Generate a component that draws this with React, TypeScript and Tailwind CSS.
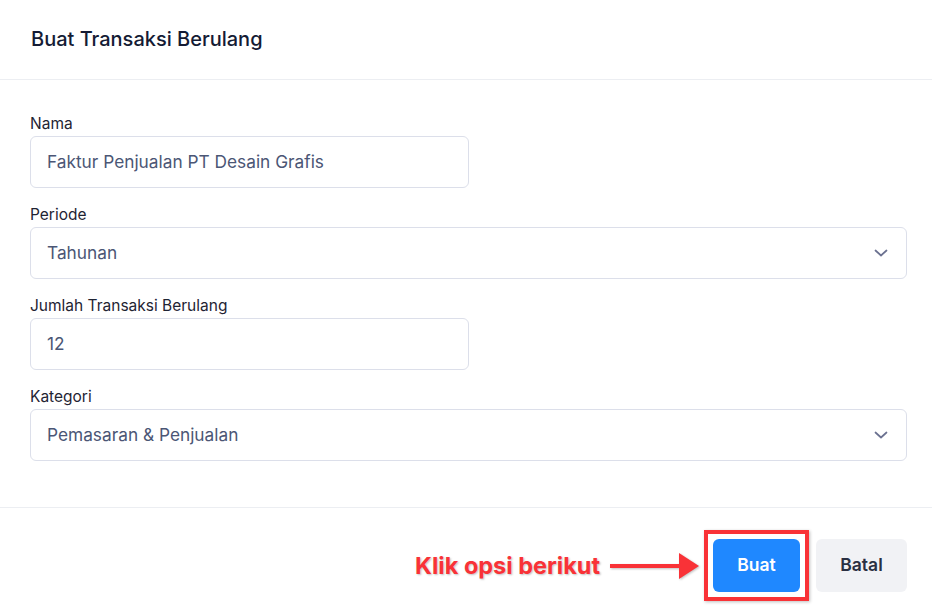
import React from 'react'

const font = { fontFamily: 'Inter, "Noto Sans", sans-serif' }

function Field({ label, value, wide, select }: { label: string; value: string; wide?: boolean; select?: boolean }) {
  return (
    <div className="flex flex-col">
      <label className="text-[15.5px] leading-5 text-[#1f2433] mb-[2px]">{label}</label>
      <div
        className={`h-[52px] ${wide ? 'w-full' : 'w-[439px]'} flex items-center justify-between rounded-md border border-[#dcdfea] bg-white pl-4 pr-[18px]`}
      >
        <span className="text-[17.3px] text-[#4b5675]">{value}</span>
        {select && (
          <svg width="14" height="8" viewBox="0 0 14 8" fill="none">
            <path d="M1.5 1.5L7 6.5L12.5 1.5" stroke="#6b7190" strokeWidth="1.7" strokeLinecap="round" strokeLinejoin="round" />
          </svg>
        )}
      </div>
    </div>
  )
}

export default function App() {
  return (
    <div className="w-[932px] h-[616px] bg-white overflow-hidden" style={font}>
      <div className="h-[80px] px-[31px] flex items-center border-b border-[#eceef2]">
        <h2 className="text-[20px] font-medium text-[#141b34] pb-[2px]">Buat Transaksi Berulang</h2>
      </div>

      <div className="pt-[34px] pb-[46px] pl-[30px] pr-[25px] flex flex-col gap-[17px] border-b border-[#eceef2]">
        <Field label="Nama" value="Faktur Penjualan PT Desain Grafis" />
        <Field label="Periode" value="Tahunan" wide select />
        <Field label="Jumlah Transaksi Berulang" value="12" />
        <Field label="Kategori" value="Pemasaran & Penjualan" wide select />
      </div>

      <div className="pt-[22px] pr-[25px] flex items-center justify-end">
        <div className="flex items-center mr-[4px]">
          <span
            className="text-[23.5px] font-bold text-[#f93237]"
            style={{ textShadow: '1px 1px 2px rgba(0,0,0,0.25)' }}
          >
            Klik opsi berikut
          </span>
          <svg width="90" height="26" viewBox="0 0 90 26" className="ml-[10px]" style={{ filter: 'drop-shadow(1px 1px 1px rgba(0,0,0,0.25))' }}>
            <rect x="0" y="11" width="72" height="4" fill="#f93237" />
            <path d="M69 0L89 13L69 26Z" fill="#f93237" />
          </svg>
        </div>
        <div className="border-[4px] border-[#f93237] p-[5px] shadow-[1px_1px_3px_rgba(0,0,0,0.25)]">
          <button className="w-[87px] h-[53px] rounded-md bg-[#1f88ff] text-white text-[17.5px] font-semibold">Buat</button>
        </div>
        <button className="ml-[7px] w-[91px] h-[53px] rounded-md bg-[#f1f2f5] text-[#2a3042] text-[17.5px] font-semibold">Batal</button>
      </div>
    </div>
  )
}
